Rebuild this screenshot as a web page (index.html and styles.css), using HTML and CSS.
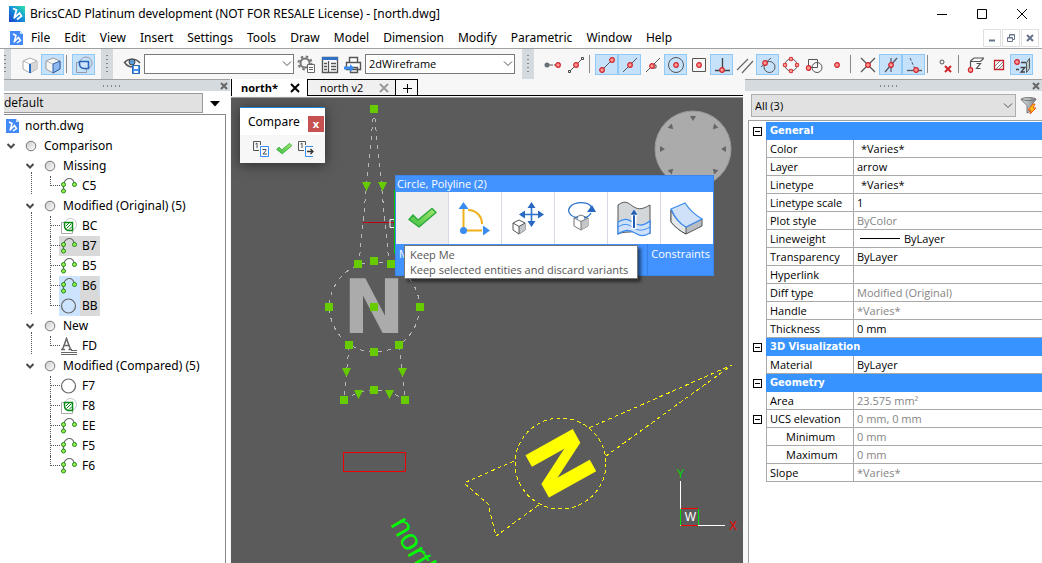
FILE: index.html
```html
<!DOCTYPE html>
<html lang="en">
<head>
<meta charset="utf-8">
<title>BricsCAD Platinum development (NOT FOR RESALE License) - [north.dwg]</title>
<link rel="stylesheet" href="styles.css">
</head>
<body>
<svg class="defs" aria-hidden="true">
  <defs>
    <linearGradient id="brand" x1="1" y1="0" x2="0" y2="1"><stop offset="0" stop-color="#2ee6a8"/><stop offset=".45" stop-color="#1597d8"/><stop offset="1" stop-color="#1a3fd0"/></linearGradient>
    <linearGradient id="tick" x1="0" y1="1" x2="1" y2="0"><stop offset="0" stop-color="#3cbf45"/><stop offset="1" stop-color="#a6e86a"/></linearGradient>
    <linearGradient id="ball" x1="0" y1="0" x2="1" y2="1"><stop offset="0" stop-color="#c8c8c8"/><stop offset="1" stop-color="#fff"/></linearGradient>
    <linearGradient id="steel" x1="0" y1="0" x2="1" y2="0"><stop offset="0" stop-color="#e4e8ea"/><stop offset="1" stop-color="#7d858a"/></linearGradient>
    <symbol id="doc" viewBox="0 0 14 16"><path d="M0 1h10l3 3v11H0z" fill="#4389f5"/><path d="M10 1v3h3z" fill="#cfe0fb"/><path d="M3 4 6 5.500 4 12.500M4 12 8.500 7.500 10.500 10.500 7 13" stroke="#fff" stroke-width="1.500" fill="none"/></symbol>
    <symbol id="cross" viewBox="0 0 8 8"><path d="M1 1l6 6M7 1 1 7" stroke="#666" stroke-width="2" fill="none"/></symbol>
    <symbol id="chev" viewBox="0 0 10 6"><path d="M1 .500 5 4.500 9 .500" stroke="#555" fill="none"/></symbol>
    <symbol id="fold" viewBox="0 0 10 10"><path d="M1.500 3 5 6.500 8.500 3" stroke="#4a4a4a" stroke-width="2" fill="none"/></symbol>
    <symbol id="knob" viewBox="0 0 12 12"><circle cx="6" cy="6" r="4.800" fill="url(#ball)" stroke="#777"/></symbol>
    <symbol id="pline" viewBox="0 0 18 18"><path d="M3.500 14V7C5 2.500 7 1.500 9.500 1.500S13.500 3 14.500 7" stroke="#666" fill="none" stroke-width="1.200"/><g fill="#9df04c" stroke="#178a1c"><circle cx="3.500" cy="7.500" r="2"/><circle cx="3.500" cy="14" r="2"/><circle cx="14.500" cy="7.500" r="2"/></g></symbol>
    <symbol id="hatch" viewBox="0 0 18 18"><path d="M1.500 5.500h11v11h-11z" fill="none" stroke="#aaa"/><circle cx="10.500" cy="7.500" r="6" fill="none" stroke="#c4c8cc"/><path d="M4.500 5.500h8v8h-3c-3 0-5-2-5-5z" fill="#fff" stroke="#0b8a15" stroke-width="1.500"/><path d="m6 9 3-3M6.500 11.500l5-5M9 12.500l3-3" stroke="#0b8a15"/></symbol>
    <symbol id="circ" viewBox="0 0 18 18"><circle cx="8.500" cy="9" r="7" fill="none" stroke="#666" stroke-width="1.200"/></symbol>
    <symbol id="txt" viewBox="0 0 18 18"><path d="M1 12.500h4M8.500 12.500H12M2.500 12.500l4-11 4 11M4 8.500h5" fill="none" stroke="#666" stroke-width="1.500"/><path d="M1 15.500h16M1 17.500h16M11 13.500h6" stroke="#666"/></symbol>
    <symbol id="dot" viewBox="0 0 6 6"><circle cx="3" cy="3" r="2.300" fill="#ff9a92" stroke="#d0222c" stroke-width="1.200"/></symbol>
    <symbol id="check" viewBox="0 0 30 22"><path d="M2 12.500 6 8l5 5L25 1.500l4 4L12 20z" fill="url(#tick)" stroke="#2eab3d" stroke-width="1.500" stroke-linejoin="round"/></symbol>
  </defs>
</svg>

<header class="titlebar">
  <svg class="logo" viewBox="0 0 16 16"><path d="M0 0h16v16H0z" fill="url(#brand)"/><path d="M4 2.500 7.500 4 5 12.500M5 12 10.500 7 12.500 10 8 13.500" stroke="#fff" stroke-width="1.800" fill="none"/></svg>
  <h1>BricsCAD Platinum development (NOT FOR RESALE License) - [north.dwg]</h1>
  <div class="wincontrols">
    <button aria-label="Minimize"><svg viewBox="0 0 12 12"><path d="M1 6.500h10" stroke="#000"/></svg></button>
    <button aria-label="Maximize"><svg viewBox="0 0 12 12"><path d="M1.500 1.500h9v9h-9z" stroke="#000" fill="none"/></svg></button>
    <button aria-label="Close"><svg viewBox="0 0 12 12"><path d="m1 1 10 10M11 1 1 11" stroke="#000"/></svg></button>
  </div>
</header>

<nav class="menubar">
  <svg class="docicon"><use href="#doc"/></svg>
  <button>File</button><button>Edit</button><button>View</button><button>Insert</button><button>Settings</button><button>Tools</button><button>Draw</button><button>Model</button><button>Dimension</button><button>Modify</button><button>Parametric</button><button>Window</button><button>Help</button>
  <div class="mdi">
    <button aria-label="Minimize drawing"><svg viewBox="0 0 10 10"><path d="M2 7.500h6" stroke="#66738a" stroke-width="2"/></svg></button>
    <button aria-label="Restore drawing"><svg viewBox="0 0 10 10"><path d="M1.500 4.500h5v4h-5zM3.500 4V1.500h5v5H7M2 5h4M4 2h4" stroke="#66738a" fill="none"/></svg></button>
    <button aria-label="Close drawing"><svg viewBox="0 0 10 10"><path d="m2 2 6 6M8 2 2 8" stroke="#66738a" stroke-width="2"/></svg></button>
  </div>
</nav>

<div class="toolbar">
  <span class="grip first"></span>
  <div class="tools t1">
    <button class="tool" aria-label="Edge selection"><svg viewBox="0 0 20 20"><path d="m10 3 7 3v8l-7 4-7-4V6z" fill="#fff" stroke="#aaa"/><path d="m10 9 7-3v8l-7 4z" fill="#d4d6d8"/><path d="m3 6 7 3 7-3" stroke="#bbb" fill="none"/><path d="M10 9v9" stroke="#2a6cc4" stroke-width="2"/></svg></button>
    <button class="tool on" aria-label="Face selection"><svg viewBox="0 0 20 20"><path d="m10 3 7 3v8l-7 4-7-4V6z" fill="#f5f5f5" stroke="#999"/><path d="m10 9 7-3v8l-7 4z" fill="#8fb8ee" stroke="#2a5ca8"/><path d="m3 6 7 3" stroke="#bbb"/></svg></button>
    <i class="sep"></i>
    <button class="tool on" aria-label="Boundary detection"><svg viewBox="0 0 20 20"><path d="M2.500 7.500h10v10h-10z" fill="none" stroke="#99a"/><circle cx="12" cy="8" r="6" fill="none" stroke="#99a"/><path d="M5.500 6.500h9v7h-4c-3 0-5-2-5-4.500z" fill="#cfe4fa" stroke="#2a66b8" stroke-width="1.600"/></svg></button>
  </div>
  <span class="grip"></span>
  <div class="tools t2">
    <button class="tool" aria-label="Save view"><svg viewBox="0 0 20 20"><path d="M2 8c4-5 12-5 16 0M3 8c2 3 5 4 8 4" fill="none" stroke="#555" stroke-width="1.400"/><circle cx="10" cy="7" r="3" fill="#5a9ad8" stroke="#444"/><path d="M10.500 10.500h7v8h-7z" fill="#4b94ee" stroke="#2569bd"/><path d="M12 11h4v3h-4zM12 16h4v2h-4z" fill="#fff"/></svg></button>
    <label class="combo"><select aria-label="View"><option></option></select><svg><use href="#chev"/></svg></label>
    <button class="tool" aria-label="Visual style settings"><svg viewBox="0 0 20 20"><circle cx="8" cy="8" r="4.500" fill="none" stroke="#777" stroke-width="2"/><circle cx="8" cy="8" r="6.500" fill="none" stroke="#777" stroke-width="2" stroke-dasharray="2.500 2.600"/><path d="M10.500 9.500h7v8h-7z" fill="#fff" stroke="#666"/><path d="M12 12.500h4M12 14.500h4" stroke="#666"/></svg></button>
    <button class="tool" aria-label="Explorer"><svg viewBox="0 0 20 20"><path d="M2.500 2.500h15v15h-15z" fill="#fff" stroke="#555" stroke-width="1.400"/><path d="M2 2h16v3H2z" fill="#2d70c4"/><path d="M8.500 6v11M4 8.500h3M4 11.500h3M4 14.500h3M11 8.500h5M11 11.500h5M11 14.500h5" stroke="#555" stroke-width="1.300"/></svg></button>
    <button class="tool" aria-label="Print"><svg viewBox="0 0 20 20"><path d="M6.500 7V2.500h8V7M3.500 7.500h14v7h-14zM7.500 12.500h7v5h-7z" fill="#fff" stroke="#555" stroke-width="1.400"/><path d="M1 11.500h6V9l4 4-4 4v-2.500H1z" fill="#3b8cf0"/></svg></button>
    <label class="combo"><select aria-label="Visual style"><option>2dWireframe</option></select><svg><use href="#chev"/></svg></label>
  </div>
  <span class="grip"></span>
  <div class="tools t3">
    <button class="tool" aria-label="Tracking point"><svg viewBox="0 0 20 20"><path d="M4 10h6M11 10h4" stroke="#555"/><circle cx="4" cy="10" r="2.500" fill="#667078"/><use href="#dot" x="12" y="7" width="6" height="6"/></svg></button>
    <button class="tool" aria-label="From"><svg viewBox="0 0 20 20"><path d="M4 16 16 4" stroke="#555"/><path d="M2.500 15.500h2v2h-2zM15.500 2.500h2v2h-2z" fill="#fff" stroke="#444"/><use href="#dot" x="7" y="7" width="6" height="6"/></svg></button>
    <i class="sep"></i>
    <button class="tool on" aria-label="Endpoint"><svg viewBox="0 0 20 20"><path d="M5 15 15 5" stroke="#555"/><use href="#dot" x="2" y="12" width="6" height="6"/><use href="#dot" x="12" y="2" width="6" height="6"/></svg></button>
    <button class="tool on" aria-label="Midpoint"><svg viewBox="0 0 20 20"><path d="M3 17 17 3" stroke="#555"/><use href="#dot" x="7" y="7" width="6" height="6"/></svg></button>
    <button class="tool" aria-label="Nearest"><svg viewBox="0 0 20 20"><path d="M3 17 17 3M10 10h3v3h-3z" stroke="#555" fill="none"/><use href="#dot" x="6" y="8" width="6" height="6"/></svg></button>
    <button class="tool on" aria-label="Center"><svg viewBox="0 0 20 20"><circle cx="10" cy="10" r="7.500" stroke="#555" fill="none"/><use href="#dot" x="7" y="7" width="6" height="6"/></svg></button>
    <button class="tool" aria-label="Geometric center"><svg viewBox="0 0 20 20"><path d="M3.500 3.500h13v13h-13z" stroke="#555" fill="none"/><use href="#dot" x="7" y="7" width="6" height="6"/></svg></button>
    <button class="tool on" aria-label="Perpendicular"><svg viewBox="0 0 20 20"><path d="M10.500 3v12M3 15.500h15" stroke="#444" stroke-width="1.300"/><use href="#dot" x="7" y="12" width="6" height="6"/></svg></button>
    <button class="tool" aria-label="Parallel"><svg viewBox="0 0 20 20"><path d="M2 15 13 4M7 18 18 6" stroke="#666" stroke-width="1.200"/></svg></button>
    <button class="tool on" aria-label="Tangent"><svg viewBox="0 0 20 20"><circle cx="11.500" cy="12" r="5.500" stroke="#555" fill="none"/><path d="M3 12 13 3" stroke="#555"/><use href="#dot" x="4" y="5" width="6" height="6"/></svg></button>
    <button class="tool" aria-label="Quadrant"><svg viewBox="0 0 20 20"><circle cx="10" cy="10" r="6" stroke="#555" fill="none"/><use href="#dot" x="7.500" y="1.500" width="5" height="5"/><use href="#dot" x="7.500" y="13.500" width="5" height="5"/><use href="#dot" x="1.500" y="7.500" width="5" height="5"/><use href="#dot" x="13.500" y="7.500" width="5" height="5"/></svg></button>
    <button class="tool" aria-label="Insertion"><svg viewBox="0 0 20 20"><path d="M4.500 4.500h9v8h-9z" stroke="#555" fill="none"/><circle cx="13" cy="12.500" r="5" stroke="#555" fill="none"/><use href="#dot" x="1.500" y="10" width="6" height="6"/></svg></button>
    <button class="tool" aria-label="Node"><svg viewBox="0 0 20 20"><use href="#dot" x="7" y="7" width="6" height="6"/></svg></button>
    <i class="sep"></i>
    <button class="tool" aria-label="Intersection"><svg viewBox="0 0 20 20"><path d="m3 3 14 14M17 3 3 17" stroke="#555" stroke-width="1.200"/><use href="#dot" x="7" y="7" width="6" height="6"/></svg></button>
    <button class="tool on" aria-label="Apparent intersection"><svg viewBox="0 0 20 20"><path d="M10 3v14M16 3 4 17" stroke="#556" stroke-width="1.200"/><use href="#dot" x="7" y="7" width="6" height="6"/></svg></button>
    <button class="tool on" aria-label="Extension"><svg viewBox="0 0 20 20"><path d="M3 15.500h15" stroke="#555" stroke-width="1.300"/><path d="m6 3 5 11" stroke="#556" stroke-dasharray="3 1.500"/><use href="#dot" x="9" y="12" width="6" height="6"/></svg></button>
    <i class="sep"></i>
    <button class="tool" aria-label="Clear snaps"><svg viewBox="0 0 20 20"><circle cx="7" cy="7" r="2" stroke="#555" fill="none"/><path d="m10 11 6 6M16 11l-6 6" stroke="#d0222c" stroke-width="2"/></svg></button>
    <i class="sep"></i>
    <button class="tool" aria-label="Fixed Z"><svg viewBox="0 0 20 20"><path d="M4.500 12V6L8 3h10M4.500 6.500h10l3-3M10.500 8.500h4l-4 5h4" stroke="#555" stroke-width="1.200" fill="none"/><use href="#dot" x="1.500" y="12" width="6" height="6"/></svg></button>
    <button class="tool" aria-label="Snap hatch"><svg viewBox="0 0 20 20"><path d="M5.500 5.500h9v9h-9z" stroke="#c4222c" stroke-width="1.300" fill="#fff"/><path d="m6 11 5-5M7 14l7-7M10 14l4-4" stroke="#888"/></svg></button>
    <button class="tool on" aria-label="Negative Z"><svg viewBox="0 0 20 20"><path d="M9 7.500h5M4 14.500h3M8.500 12.500H13l-4 4.500h4" stroke="#444" fill="none" stroke-width="1.300"/><path d="m14.500 7.500 3-4v10l-3 4z" fill="#bcc" stroke="#555"/><use href="#dot" x="2" y="4" width="6" height="6"/></svg></button>
  </div>
</div>

<main class="workspace">
  <aside class="structure">
    <div class="dockhead"><span class="dots"></span><button aria-label="Close structure panel"><svg><use href="#cross"/></svg></button></div>
    <div class="config"><select aria-label="Configuration"><option>default</option></select><button aria-label="Configurations"><svg viewBox="0 0 10 6"><path d="M0 0h10L5 5.500z"/></svg></button></div>
    <div class="tree">
      <div class="row root"><svg class="docicon"><use href="#doc"/></svg>north.dwg</div>
      <div class="row top"><svg class="fold"><use href="#fold"/></svg><svg class="knob"><use href="#knob"/></svg>Comparison</div>
      <ul class="groups">
        <li><div class="row"><svg class="fold"><use href="#fold"/></svg><svg class="knob"><use href="#knob"/></svg>Missing</div>
          <ul class="leaves"><li><svg><use href="#pline"/></svg><span>C5</span></li></ul></li>
        <li><div class="row"><svg class="fold"><use href="#fold"/></svg><svg class="knob"><use href="#knob"/></svg>Modified (Original) (5)</div>
          <ul class="leaves"><li><svg><use href="#hatch"/></svg><span>BC</span></li><li class="marked"><svg><use href="#pline"/></svg><span>B7</span></li><li><svg><use href="#pline"/></svg><span>B5</span></li><li class="picked"><svg><use href="#pline"/></svg><span>B6</span></li><li class="picked"><svg><use href="#circ"/></svg><span>BB</span></li></ul></li>
        <li><div class="row"><svg class="fold"><use href="#fold"/></svg><svg class="knob"><use href="#knob"/></svg>New</div>
          <ul class="leaves"><li><svg><use href="#txt"/></svg><span>FD</span></li></ul></li>
        <li><div class="row"><svg class="fold"><use href="#fold"/></svg><svg class="knob"><use href="#knob"/></svg>Modified (Compared) (5)</div>
          <ul class="leaves"><li><svg><use href="#circ"/></svg><span>F7</span></li><li><svg><use href="#hatch"/></svg><span>F8</span></li><li><svg><use href="#pline"/></svg><span>EE</span></li><li><svg><use href="#pline"/></svg><span>F5</span></li><li><svg><use href="#pline"/></svg><span>F6</span></li></ul></li>
      </ul>
    </div>
  </aside>

  <section class="drawing">
    <div class="tabs">
      <div class="tab current"><button>north*</button><button class="x" aria-label="Close north"><svg viewBox="0 0 10 10"><path d="m1 1 8 8M9 1 1 9" stroke="#000" stroke-width="2"/></svg></button></div>
      <div class="tab"><button>north v2</button><button class="x" aria-label="Close north v2"><svg viewBox="0 0 10 10"><path d="m1 1 8 8M9 1 1 9" stroke="#999" stroke-width="2"/></svg></button></div>
      <button class="plus" aria-label="New drawing"><svg viewBox="0 0 10 10"><path d="M5.500 1v9M1 5.500h9" stroke="#000"/></svg></button>
      <span class="rest"></span>
    </div>
    <div class="canvas">
      <svg class="model" viewBox="231 98 512 465" preserveAspectRatio="xMinYMin slice">
        <circle cx="693" cy="149" r="38" fill="#ababab" stroke="#999"/>
        <g fill="#666"><path d="M690 116h6l-3 5z"/><path d="M690 116h6l-3 5z" transform="rotate(45 693 149)"/><path d="M690 116h6l-3 5z" transform="rotate(90 693 149)"/><path d="M690 116h6l-3 5z" transform="rotate(135 693 149)"/><path d="M690 116h6l-3 5z" transform="rotate(225 693 149)"/><path d="M690 116h6l-3 5z" transform="rotate(270 693 149)"/><path d="M690 116h6l-3 5z" transform="rotate(315 693 149)"/></g>
        <g fill="none" stroke="#b8b8b8" stroke-dasharray="4 5" shape-rendering="crispEdges">
          <path d="M374 109 359 263M374 109l15 154M349 346l-5 54M399 346l6 54M344 400q30-20 61 0"/><circle cx="374.500" cy="307" r="45"/>
        </g>
        <text class="compass" x="374" y="333" fill="#ababab">N</text>
        <path d="M363 222.500h32" stroke="#c00010"/><path d="M395 219.500h-5v8h5" fill="none" stroke="#fff"/><path d="M394.500 190v64" stroke="#00c800"/>
        <g fill="#66cc00"><path d="M370 105h8v8h-8zM354 260h8v8h-8zM370 257h8v8h-8zM387 260h8v8h-8zM325 303h8v8h-8zM370 303h8v8h-8zM416 303h8v8h-8zM345 341h8v8h-8zM395 341h8v8h-8zM370 348h8v8h-8zM340 396h8v8h-8zM370 386h8v8h-8zM401 396h8v8h-8z"/><path d="M362 182h9l-4.500 9zM378 182h9l-4.500 9zM342 368h9l-4.500 9zM398 368h9l-4.500 9zM354 390h9l-4.500 9zM385 390h9l-4.500 9z"/></g>
        <path d="M343.500 452.500h62v19h-62z" fill="none" stroke="#f00000"/>
        <g fill="none" stroke="#ff0" stroke-dasharray="4 3" shape-rendering="crispEdges"><circle cx="560.500" cy="463.500" r="45.500"/><path d="M589 428 732 365 606 456M514 461l-50 22 24 21 8 32 44-32"/></g>
        <text class="compass" x="560.500" y="490" fill="#ff0" transform="rotate(61 560.500 463.500)">N</text>
        <text class="note" x="390" y="524" transform="rotate(60 390 524)">north</text>
        <g fill="none"><path d="M680.500 481v44.500H725" stroke="#fff"/><path d="M681 508.500h17M681 525.500h17" stroke="#f00"/><path d="M680.500 509v16M698.500 509v16" stroke="#0d0"/></g>
        <text class="axis" x="680.500" y="478" fill="#00d800">Y</text><text class="axis" x="733" y="530" fill="#f00000">X</text><text class="axis" x="690.500" y="521" fill="#fff">W</text>
      </svg>

      <div class="palette">
        <div class="palhead"><h2>Compare</h2><button class="palclose" aria-label="Close Compare">x</button></div>
        <div class="paltools">
          <button aria-label="Compare two drawings"><svg viewBox="0 0 18 18"><path d="M7 10.500H1.500v-9h7V5M3.500 4 5 3v5" fill="none" stroke="#555"/><path d="M8.500 6.500h8v10h-8z" fill="#fff" stroke="#3b8cf0"/><path d="M10.500 9.500H14v1l-3 3.500h4" fill="none" stroke="#444"/></svg></button>
          <button aria-label="Accept"><svg viewBox="-1 -1 32 25"><use href="#check" width="30" height="22"/></svg></button>
          <button aria-label="Apply differences"><svg viewBox="0 0 18 18"><path d="M7 10.500H1.500v-9h7V5M3.500 4 5 3v5" fill="none" stroke="#555"/><path d="M16 6.500H8.500v10H16" fill="none" stroke="#3b8cf0"/><path d="M10 11.500h6M13.500 9l2.500 2.500-2.500 2.500" fill="none" stroke="#333" stroke-width="1.300"/></svg></button>
        </div>
      </div>

      <div class="quad">
        <div class="quadhead">Circle, Polyline (2)</div>
        <div class="quadgrid">
          <button class="hot" aria-label="Keep Me"><svg viewBox="0 0 40 40"><use href="#check" x="5" y="9" width="30" height="22"/></svg></button>
          <button aria-label="Dimension"><svg viewBox="0 0 40 40"><path d="M8.500 11v18M11 32.500h16M13 12c8 0 14 6 14 14" fill="none" stroke="#efb01c" stroke-width="2"/><path d="m8.500 4 5 7h-10zM35 32.500l-7 5v-10z" fill="#3b8cf0"/><circle cx="8.500" cy="32.500" r="3.500" fill="#3b8cf0"/></svg></button>
          <button aria-label="Move"><svg viewBox="0 0 40 40"><path d="M23.500 8v17M16 16.500h15" stroke="#2c72cc" stroke-width="1.600"/><path d="m23.500 4 4 6h-8zM23.500 29l4-6h-8zM11 16.500l6-4v8zM36 16.500l-6-4v8z" fill="#2868c0"/><path d="m11 22 6 3v7l-6 4-6-4v-7z" fill="#fff" stroke="#555"/><path d="m11 28.500 6-3.500v7l-6 4z" fill="#c4c7ca"/><path d="m5 25 6 3.500 6-3.500M11 28.500V36" fill="none" stroke="#555"/></svg></button>
          <button aria-label="Rotate"><svg viewBox="0 0 40 40"><path d="m20 17 7 3v8l-7 4-7-4v-8z" fill="#fff" stroke="#777"/><path d="m20 23.500 7-3.500v8l-7 4z" fill="#c4c7ca"/><path d="m13 20 7 3.500 7-3.500M20 23.500V32" fill="none" stroke="#777"/><path d="M17 20C8 18 6 13 9 9c5-6 19-6 22 1M23 20c4-1 6-3 7-5" fill="none" stroke="#2c72cc" stroke-width="1.300"/><path d="m31 7 4 7h-9z" fill="#2868c0"/></svg></button>
          <button aria-label="Extrude face"><svg viewBox="0 0 40 40"><path d="M4 7c8-6 11-1 16 2s9 2 16-2v29c-8-6-10-5-15-3s-10 0-17 3z" fill="#d4d7da" stroke="#555"/><path d="M4 24c8-5 11-2 16 1s9 3 16-2v12c-7 4-10 3-15 0s-9-4-17 1z" fill="#cfe1f8" stroke="#3b8cf0" stroke-width="1.300"/><path d="M4 29c8-5 11-2 16 1s9 3 16-1" fill="none" stroke="#3b8cf0"/><path d="M20 31V14" stroke="#fff" stroke-width="5"/><path d="M20 30V16" stroke="#1f5cb4" stroke-width="2"/><path d="m20 11 4 6h-8z" fill="#1f5cb4" stroke="#fff" stroke-width=".5"/></svg></button>
          <button aria-label="Thicken"><svg viewBox="0 0 40 40"><path d="M4 12v12c4 5 9 9 15 12l16-8v-7l-16 8z" fill="#b9bdc1" stroke="#555"/><path d="M4 24V12c4 9 9 13 15 17v7C13 33 8 29 4 24z" fill="#e4e7ea" stroke="#555"/><path d="M4 11 18 5c4 6 10 12 17 16l-16 8C13 26 8 20 4 11z" fill="#cfe1f8" stroke="#3b8cf0" stroke-width="1.300"/></svg></button>
        </div>
        <div class="quadfoot"><button>Model</button><button>Constraints</button></div>
      </div>
      <div class="tooltip" role="tooltip"><div>Keep Me</div><div>Keep selected entities and discard variants</div></div>
    </div>
  </section>

  <aside class="properties">
    <div class="dockhead"><span class="dots"></span><button aria-label="Close properties panel"><svg><use href="#cross"/></svg></button></div>
    <div class="filter">
      <label class="combo"><select aria-label="Selection"><option>All (3)</option></select><svg><use href="#chev"/></svg></label>
      <button aria-label="Quick select"><svg viewBox="0 0 18 18"><path d="M1 2c3-2 12-2 15 0-1 3-5 5-5 7v5l-4 2V9C7 7 2 5 1 2z" fill="url(#steel)" stroke="#777"/><path d="M2 2.500c3 1.500 10 1.500 13 0" stroke="#777" fill="none"/><path d="m13 7-5 6h3l-1 4 6-6h-3l2-4z" fill="#ffc21a" stroke="#f05a14"/></svg></button>
    </div>
    <div class="sheet">
      <table>
        <colgroup><col class="c0"><col class="c1"><col></colgroup>
        <tbody>
        <tr class="cat"><td><button class="pm" aria-label="Collapse General"></button></td><th colspan="2">General</th></tr>
        <tr><td></td><th>Color</th><td class="in">*Varies*</td></tr>
        <tr><td></td><th>Layer</th><td>arrow</td></tr>
        <tr><td></td><th>Linetype</th><td class="in">*Varies*</td></tr>
        <tr><td></td><th>Linetype scale</th><td>1</td></tr>
        <tr><td></td><th>Plot style</th><td class="ro">ByColor</td></tr>
        <tr><td></td><th>Lineweight</th><td><span class="weight"></span>ByLayer</td></tr>
        <tr><td></td><th>Transparency</th><td>ByLayer</td></tr>
        <tr><td></td><th>Hyperlink</th><td></td></tr>
        <tr><td></td><th>Diff type</th><td class="ro">Modified (Original)</td></tr>
        <tr><td></td><th>Handle</th><td class="ro">*Varies*</td></tr>
        <tr><td></td><th>Thickness</th><td>0 mm</td></tr>
        <tr class="cat"><td><button class="pm" aria-label="Collapse 3D Visualization"></button></td><th colspan="2">3D Visualization</th></tr>
        <tr><td></td><th>Material</th><td>ByLayer</td></tr>
        <tr class="cat"><td><button class="pm" aria-label="Collapse Geometry"></button></td><th colspan="2">Geometry</th></tr>
        <tr><td></td><th>Area</th><td class="ro">23.575 mm²</td></tr>
        <tr><td><button class="pm" aria-label="Collapse UCS elevation"></button></td><th>UCS elevation</th><td class="ro">0 mm, 0 mm</td></tr>
        <tr><td></td><th class="sub">Minimum</th><td class="ro">0 mm</td></tr>
        <tr><td></td><th class="sub">Maximum</th><td class="ro">0 mm</td></tr>
        <tr><td></td><th>Slope</th><td class="ro">*Varies*</td></tr>
        </tbody>
      </table>
    </div>
  </aside>
</main>
</body>
</html>
```
FILE: styles.css
```css
* { box-sizing: border-box; }
html, body { height: 100%; }
body {
  margin: 0;
  display: flex;
  flex-direction: column;
  overflow: hidden;
  background: #fff;
  color: #000;
  font: 12px/16px "Noto Sans", "Open Sans", sans-serif;
}
button, select { font: inherit; color: inherit; margin: 0; padding: 0; border: 0; background: none; border-radius: 0; }
svg { display: block; flex: none; }
ul { list-style: none; margin: 0; padding: 0; }
h1, h2 { margin: 0; font-size: inherit; font-weight: 400; }
.defs { position: absolute; width: 0; height: 0; }

/* Title bar and menus */
.titlebar { display: flex; align-items: center; height: 28px; padding-left: 9px; gap: 5px; flex: none; }
.titlebar h1 { flex: 1; white-space: nowrap; overflow: hidden; }
.logo { width: 16px; height: 16px; }
.wincontrols { display: flex; }
.wincontrols button { width: 40px; height: 28px; display: grid; place-items: center; }
.wincontrols svg { width: 12px; height: 12px; }
.menubar { display: flex; align-items: center; height: 21px; padding: 0 3px 0 10px; gap: 14px; border-bottom: 1px solid #a0a0a0; flex: none; }
.docicon { width: 14px; height: 16px; }
.menubar .docicon { margin-right: -7px; }
.mdi { margin-left: auto; display: flex; gap: 1px; }
.mdi button { width: 18px; height: 18px; border: 1px solid #e0e0e0; display: grid; place-items: center; }
.mdi svg { width: 10px; height: 10px; }

/* Toolbar */
.toolbar { display: flex; height: 30px; margin-left: 4px; background: #f7f7f7; flex: none; }
.grip { width: 12px; background: #d5dade; flex: none; display: grid; place-items: center; }
.grip.first { width: 7px; }
.grip::before { content: ""; width: 2px; height: 19px; background: repeating-linear-gradient(#888 0 1px, transparent 1px 4px); }
.grip.first::before { justify-self: start; }
.tools { display: flex; align-items: center; }
.t1 { padding: 0 6px 0 7px; }
.t2 { padding: 0 6px 0 7px; }
.t3 { padding-left: 7px; }
.tool { width: 23px; height: 21px; display: grid; place-items: center; border: 1px solid transparent; flex: none; }
.tool svg { width: 20px; height: 20px; }
.tool.on { background: #c6e2fa; border-color: #90c8f6; }
.sep { width: 8px; height: 18px; background: linear-gradient(#888, #888) 2px 0 / 1px 100% no-repeat; flex: none; }
.combo { position: relative; display: block; }
.combo select { appearance: none; width: 100%; height: 20px; padding: 0 3px; border: 1px solid #7a7a7a; background: #fff; font: 11px/16px "Open Sans", "Noto Sans", sans-serif; }
.combo svg { position: absolute; right: 2px; top: 7px; width: 10px; height: 6px; pointer-events: none; }
.tools .combo { width: 150px; margin: 0 1px; }

/* Panels */
.workspace { flex: 1; min-height: 0; display: flex; }
.structure, .properties { display: flex; flex-direction: column; border-top: 1px solid #a0a0a0; }
.structure { width: 226px; margin-left: 4px; flex: none; background: #fff; }
.properties { width: 297px; flex: none; background: #f7f7f7; }
.dockhead { height: 11px; background: #d5dade; display: flex; align-items: center; padding-right: 2px; flex: none; }
.dots { flex: 1; height: 2px; background: repeating-linear-gradient(90deg, #888 0 1px, transparent 1px 4px) center / 18px 2px no-repeat; }
.dockhead svg { width: 8px; height: 8px; }
.config { display: flex; height: 23px; padding: 2px 3px 0 0; flex: none; }
.config select { appearance: none; width: 199px; height: 20px; border: 1px solid #999; border-left: 0; background: #e1e1e1; font-family: "Open Sans", "Noto Sans", sans-serif; }
.config button { flex: 1; display: grid; place-items: center; }
.config svg { width: 10px; height: 6px; }
.tree { flex: 1; border-top: 1px solid #888; border-right: 1px solid #888; margin: 0 4px 0 0; padding: 1px 0; overflow: hidden; }
.row { display: flex; align-items: center; height: 20px; white-space: nowrap; }
.root { padding-left: 2px; gap: 5px; }
.fold { width: 10px; height: 10px; margin: 0 9px 0 2px; }
.knob { width: 12px; height: 12px; margin-right: 7px; }
.groups { padding-left: 19px; }
.groups > li { position: relative; }
.groups > li:not(:last-child)::before { content: ""; position: absolute; left: 8px; top: 16px; bottom: 2px; border-left: 1px dotted #555; }
.leaves li { position: relative; display: flex; align-items: center; height: 20px; padding-left: 37px; }
.leaves li::before { content: ""; position: absolute; left: 27px; top: 0; bottom: 0; border-left: 1px dotted #555; }
.leaves li:last-child::before { bottom: 10px; }
.leaves li::after { content: ""; position: absolute; left: 28px; width: 9px; top: 9px; border-top: 1px dotted #555; }
.leaves svg { width: 18px; height: 18px; }
.leaves span { padding: 2px; margin-left: 2px; }
.marked { background: linear-gradient(#d9d9d9, #d9d9d9) 36px 0 / 41px 100% no-repeat; }
.picked { background: linear-gradient(#cce4fd, #cce4fd) 36px 0 / 41px 100% no-repeat; }
.picked span { background: #d9d9d9; }

/* Drawing area */
.drawing { flex: 1; min-width: 0; display: flex; flex-direction: column; padding: 0 2px 0 1px; background: #f7f7f7; }
.tabs { display: flex; height: 18px; flex: none; padding-bottom: 1px; font: 11px/14px "Open Sans", "Noto Sans", sans-serif; }
.tab { display: flex; align-items: center; justify-content: space-between; width: 88px; padding: 0 6px 0 12px; background: #f0f0f0; border: 1px solid #000; border-left: 0; }
.tab.current { width: 77px; padding: 0 7px 0 9px; font-weight: 700; background: #fff; border-left: 1px solid #000; border-bottom: 0; border-top: 0; }
.tab .x svg { width: 10px; height: 10px; }
.plus { width: 22px; border: 1px solid #000; border-left: 0; display: grid; place-items: center; }
.plus svg { width: 10px; height: 10px; }
.rest { flex: 1; border-bottom: 1px solid #000; }
.canvas { position: relative; flex: 1; overflow: hidden; background: #5b5b5b; border-top: 1px solid #999; }
.model { width: 100%; height: 100%; }
.compass { font: 700 74px "DejaVu Sans", sans-serif; text-anchor: middle; }
.note { font: 30px "Liberation Sans", sans-serif; fill: #0f0; }
.axis { font: 12px "Liberation Sans", sans-serif; text-anchor: middle; }

.palette { position: absolute; left: 9px; top: 9px; width: 85px; background: #fff; border-top: 1px solid #1883d7; box-shadow: 0 2px 12px rgba(0, 0, 0, .5); }
.palhead { display: flex; align-items: center; justify-content: space-between; height: 27px; padding: 1px 1px 0 8px; }
.palclose { width: 16px; height: 16px; margin-top: 4px; background: #c75050; color: #fff; font-weight: 700; font-size: 11px; line-height: 14px; }
.paltools { display: flex; justify-content: space-between; align-items: center; height: 28px; padding: 0 10px 0 12px; background: #f7f7f7; }
.paltools svg { width: 18px; height: 18px; }

.quad { position: absolute; left: 164px; top: 77px; width: 319px; background: #4292ff; color: #fff; font: 11px/16px "Open Sans", "Noto Sans", sans-serif; border: 1px solid #3b86ea; }
.quadhead { padding-left: 1px; }
.quadgrid { display: grid; grid-template-columns: repeat(6, 1fr); gap: 1px; background: #d8d8e8; }
.quadgrid button { height: 52px; display: grid; place-items: center; background: #fff; }
.quadgrid .hot { background: #eee; }
.quadgrid svg { width: 40px; height: 40px; }
.quadfoot { display: flex; height: 31px; }
.quadfoot button { display: flex; padding: 2px 3px; text-align: left; }
.quadfoot button:first-child { flex: 1; border-right: 1px solid #3380e8; }
.tooltip { position: absolute; left: 173px; top: 147px; width: 234px; padding: 1px 0 1px 5px; background: #fff; color: #575757; border: 1px solid #767676; box-shadow: 3px 3px 3px rgba(0, 0, 0, .5); font: 11px/15px "Open Sans", "Noto Sans", sans-serif; white-space: nowrap; }

/* Properties */
.filter { display: flex; align-items: center; gap: 4px; height: 29px; padding: 0 4px 0 6px; flex: none; }
.filter .combo { flex: 1; }
.filter select { height: 23px; background: #e1e1e1; border-color: #adadad; }
.filter .combo svg { top: 9px; right: 3px; }
.filter button svg { width: 18px; height: 18px; }
.sheet { flex: 1; margin-left: 3px; border: 1px solid #a0a0a0; border-width: 1px 0 0 1px; background: #fff; overflow: hidden; padding-top: 1px; }
table { width: 100%; table-layout: fixed; border-collapse: separate; border-spacing: 0; font: 11px/16px "Open Sans", "Noto Sans", sans-serif; }
.c0 { width: 17px; }
.c1 { width: 87px; }
td, th { height: 18px; padding: 1px 0 0 4px; text-align: left; font-weight: 400; white-space: nowrap; border-bottom: 1px solid #a9a9a9; }
tr > :first-child { padding: 0; border-bottom: 0; }
th { border-left: 1px solid #a9a9a9; padding-left: 3px; }
th + td { border-left: 1px solid #a9a9a9; padding-left: 3px; }
.cat th { background: #3793ff; color: #fff; font-family: "DejaVu Sans Condensed", "DejaVu Sans", sans-serif; font-weight: 700; border-color: #3793ff; }
th + td.in { padding-left: 7px; }
td.ro { color: #858585; }
th.sub { padding-left: 19px; }
.pm { display: block; width: 9px; height: 9px; margin-left: 4px; border: 1px solid #000; background: linear-gradient(#000, #000) center / 5px 1px no-repeat; }
.weight { display: inline-block; width: 40px; margin: 0 4px 0 3px; border-top: 1px solid #000; vertical-align: 4px; }
```
